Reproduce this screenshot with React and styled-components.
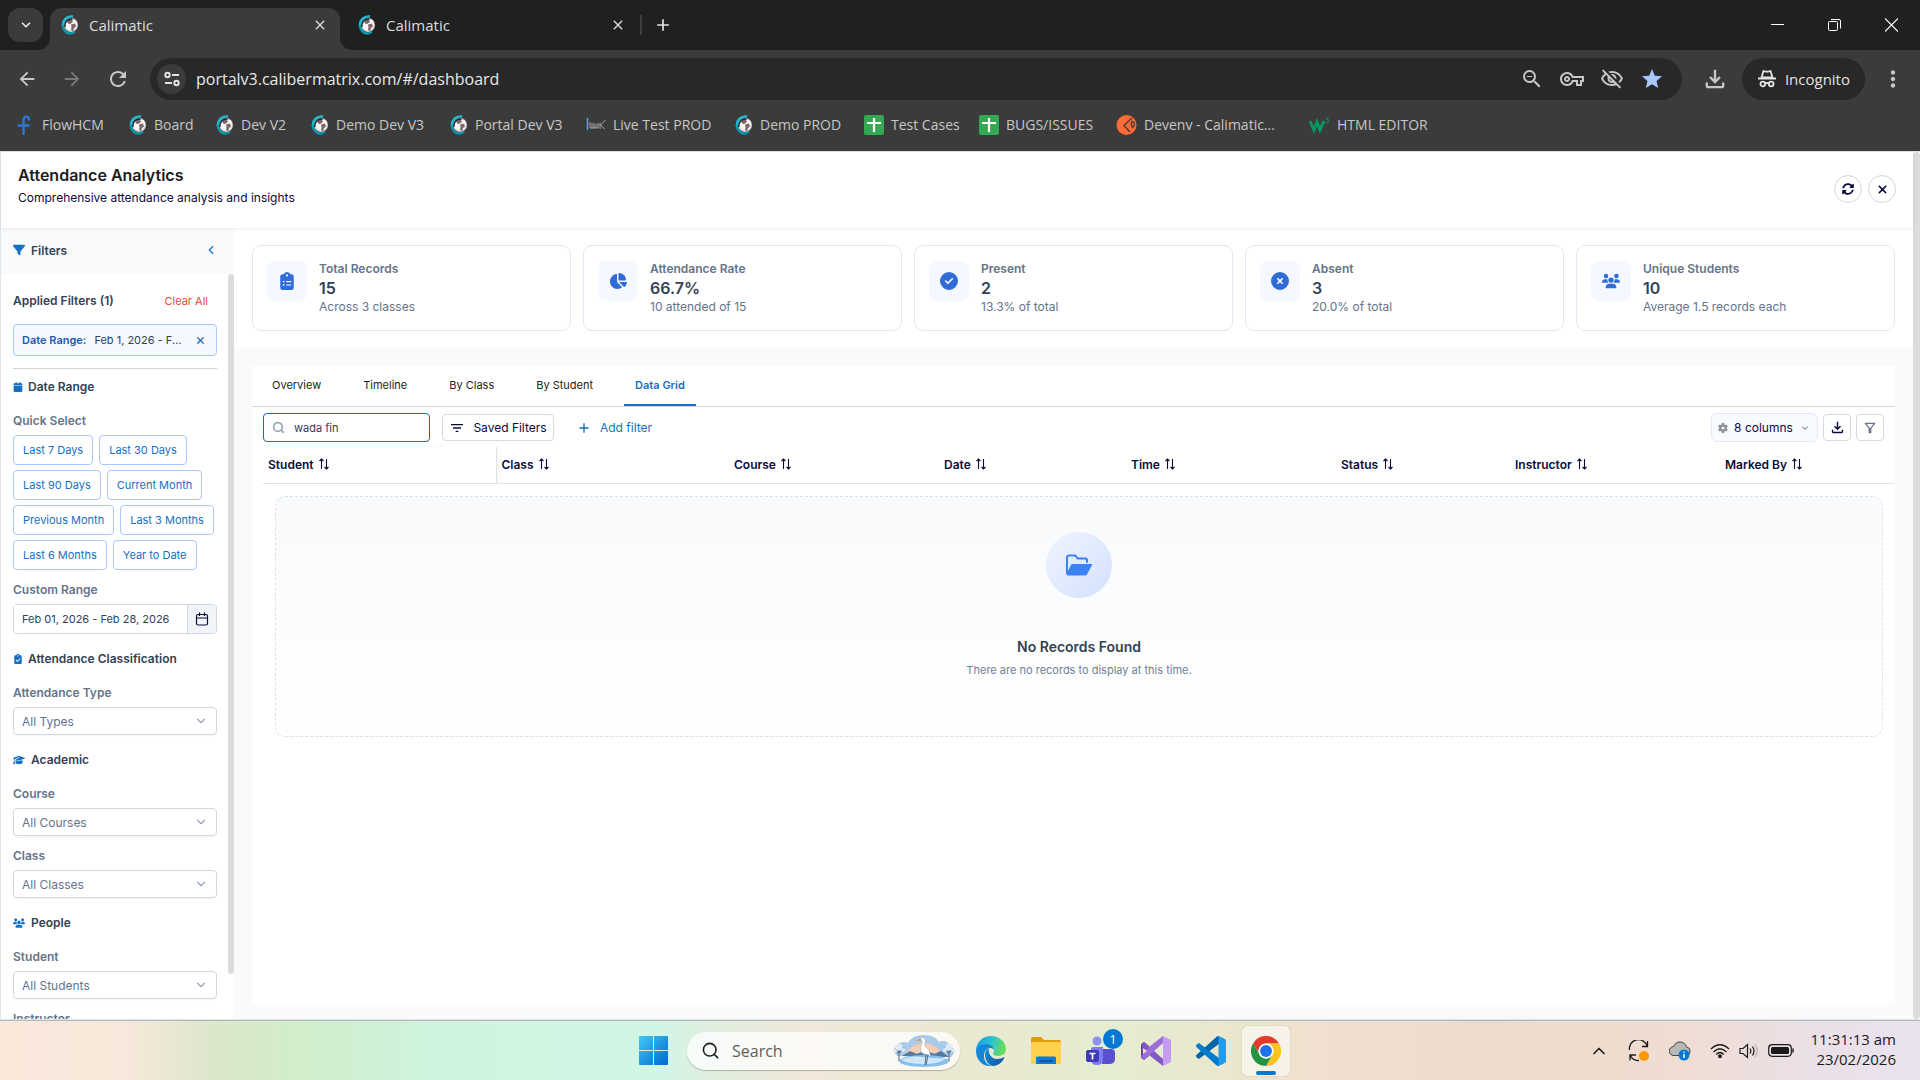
import React, { useState } from "react";
import styled, { createGlobalStyle, css } from "styled-components";
import {
  FaFilter,
  FaClipboardList,
  FaChartPie,
  FaCircleCheck,
  FaCircleXmark,
  FaUsers,
  FaGraduationCap,
  FaCalendar,
  FaClipboardCheck,
  FaXmark,
  FaGear,
} from "react-icons/fa6";
import { FaSyncAlt } from "react-icons/fa";
import {
  MdFilterList,
  MdAdd,
  MdArrowBack,
  MdArrowForward,
  MdRefresh,
  MdZoomOut,
  MdOutlineVpnKey,
  MdOutlineVisibilityOff,
  MdStar,
  MdOutlineFileDownload,
  MdMoreVert,
  MdClose,
  MdKeyboardArrowDown,
  MdOutlineFilterAlt,
} from "react-icons/md";
import { Search, ChevronDown, ChevronLeft, ChevronUp } from "lucide-react";

const appFont = `Inter, "Liberation Sans", sans-serif`;
const systemFont = `"Open Sans", "Noto Sans", sans-serif`;

const colors = {
  primary: "#1570c4",
  icon: "#2f6cd4",
  navy: "#0b0b3b",
  heading: "#334155",
  muted: "#64748b",
  border: "#d3d8e2",
  cardBorder: "#e2e8f4",
  chipBorder: "#a9c8fa",
  tint: "#f5f8ff",
  surface: "#f8fafc",
  thumb: "#dcdcdc",
  toolbar: "#3b3b3b",
  toolbarIcon: "#c7c7c7",
  omnibox: "#282828",
};

const GlobalStyle = createGlobalStyle`
  * {
    box-sizing: border-box;
  }
  body {
    margin: 0;
    font-family: ${appFont};
  }
  button, input, select {
    font: inherit;
    color: inherit;
    margin: 0;
  }
  button {
    background: none;
    border: 0;
    padding: 0;
    cursor: pointer;
  }
  h1, h2, h3, p {
    margin: 0;
  }
  svg {
    display: block;
    flex: none;
  }
`;

const Desktop = styled.div`
  display: flex;
  flex-direction: column;
  height: 100vh;
  overflow: hidden;
`;

/* ---------- browser ---------- */

const Browser = styled.header`
  font-family: ${systemFont};
  background: ${colors.toolbar};
  color: #e3e3e3;
`;

const TabStrip = styled.div`
  display: flex;
  height: 50px;
  padding: 8px 0 0 8px;
  background: #1f2120;
`;

const TabSearch = styled.button`
  display: grid;
  place-items: center;
  width: 35px;
  height: 34px;
  margin-right: 7px;
  border-radius: 12px;
  background: ${colors.toolbar};
`;

const BrowserTab = styled.div`
  display: flex;
  align-items: center;
  gap: 10px;
  width: ${(p) => (p.$active ? 290 : 298)}px;
  padding: 0 12px 8px ${(p) => (p.$active ? 10 : 17)}px;
  font-size: 15px;
  color: #dcdcdc;
  ${(p) =>
    p.$active &&
    css`
      position: relative;
      background: ${colors.toolbar};
      border-radius: 12px 12px 0 0;
      &::before,
      &::after {
        content: "";
        position: absolute;
        bottom: 0;
        width: 12px;
        height: 12px;
      }
      &::before {
        left: -12px;
        background: radial-gradient(circle at 0 0, transparent 12px, ${colors.toolbar} 12px);
      }
      &::after {
        right: -12px;
        background: radial-gradient(circle at 100% 0, transparent 12px, ${colors.toolbar} 12px);
      }
    `}
  span {
    flex: 1;
  }
`;

const NewTab = styled.button`
  display: flex;
  align-items: center;
  height: 34px;
  padding-left: 2px;
  gap: 11px;
  &::before {
    content: "";
    width: 2px;
    height: 20px;
    background: #3c3e3d;
  }
`;

const WindowControls = styled.div`
  display: flex;
  align-items: center;
  gap: 44px;
  height: 34px;
  margin-left: auto;
  padding-right: 22px;
`;

const Toolbar = styled.div`
  display: flex;
  align-items: center;
  height: 58px;
  padding: 0 14px 0 16px;
  color: ${colors.toolbarIcon};
`;

const NavButtons = styled.div`
  display: flex;
  gap: 23px;
  margin-right: 20px;
`;

const Omnibox = styled.div`
  display: flex;
  align-items: center;
  flex: 1;
  height: 42px;
  padding: 0 18px 0 7px;
  border-radius: 21px;
  background: ${colors.omnibox};
  input {
    flex: 1;
    padding: 0 0 0 10px;
    border: 0;
    outline: 0;
    background: none;
    color: #e8e8e8;
    font-size: 16px;
  }
`;

const SiteInfo = styled.button`
  display: grid;
  place-items: center;
  width: 29px;
  height: 30px;
  border-radius: 15px;
  background: ${colors.toolbar};
`;

const OmniboxActions = styled.div`
  display: flex;
  gap: 16px;
`;

const DownloadButton = styled.button`
  margin-left: 19px;
`;

const Incognito = styled.button`
  display: flex;
  align-items: center;
  gap: 9px;
  height: 42px;
  margin: 0 15px 0 13px;
  padding: 0 15px 0 16px;
  border-radius: 21px;
  background: ${colors.omnibox};
  color: #e3e3e3;
  font-size: 15px;
`;

const Bookmarks = styled.nav`
  display: flex;
  height: 43px;
  padding: 7px 0 0 17px;
  color: #c7c7c7;
  font-size: 14px;
  line-height: 20px;
`;

const Bookmark = styled.a`
  display: flex;
  align-items: center;
  gap: 7px;
  height: 20px;
  color: inherit;
  text-decoration: none;
  white-space: nowrap;
  flex: 0 0 ${(p) => p.$width}px;
`;

/* ---------- page ---------- */

const Page = styled.div`
  display: flex;
  flex: 1;
  min-height: 0;
  border: 1px solid #dfe5ee;
  border-right: 0;
  background: #fff;
`;

const PageContent = styled.div`
  display: flex;
  flex-direction: column;
  flex: 1;
  min-width: 0;
`;

const PageScroll = styled.div`
  width: 7px;
  border-radius: 4px;
  background: ${colors.thumb};
`;

const PageHeader = styled.div`
  display: flex;
  justify-content: space-between;
  height: 76px;
  padding: 12px 17px 0;
  box-shadow: 0 1px 4px rgba(0, 0, 0, 0.08);
  z-index: 1;
  h1 {
    font-size: 16px;
    line-height: 22px;
    font-weight: 600;
    color: #1c1c1c;
  }
  p {
    font-size: 12px;
    line-height: 24px;
    color: ${colors.navy};
  }
`;

const HeaderActions = styled.div`
  display: flex;
  gap: 6px;
  padding-top: 11px;
`;

const RoundButton = styled.button`
  display: grid;
  place-items: center;
  width: 28px;
  height: 28px;
  border: 1px solid #d6d6dc;
  border-radius: 50%;
  color: ${colors.navy};
`;

const Body = styled.div`
  display: flex;
  flex: 1;
  min-height: 0;
`;

const Sidebar = styled.aside`
  display: flex;
  flex-direction: column;
  width: 233px;
  color: ${colors.heading};
  font-size: 12px;
`;

const SidebarHeader = styled.div`
  display: flex;
  align-items: center;
  height: 46px;
  padding: 0 16px 2px 12px;
  gap: 6px;
  background: ${colors.surface};
  color: ${colors.primary};
  h2 {
    flex: 1;
    font-size: 12px;
    font-weight: 600;
    color: ${colors.heading};
  }
`;

const SidebarBody = styled.div`
  display: flex;
  flex: 1;
  min-height: 0;
  justify-content: space-between;
`;

const FilterList = styled.div`
  width: 216px;
  padding: 18px 0 0 12px;
  overflow: hidden;
`;

const SidebarThumb = styled.div`
  width: 6px;
  height: 94%;
  border-radius: 3px;
  background: ${colors.thumb};
`;

const Applied = styled.div`
  display: flex;
  justify-content: space-between;
  padding-right: 9px;
  line-height: 18px;
  font-weight: 600;
  button {
    color: #f04444;
    font-size: 11px;
    font-weight: 400;
  }
`;

const Chip = styled.div`
  display: flex;
  align-items: center;
  gap: 8px;
  height: 32px;
  margin-top: 14px;
  padding: 0 10px 0 8px;
  border: 1px solid ${colors.chipBorder};
  border-radius: 4px;
  background: ${colors.tint};
  font-size: 11px;
  b {
    font-weight: 600;
    color: #2459a9;
    white-space: nowrap;
  }
  span {
    flex: 1;
    overflow: hidden;
    text-overflow: ellipsis;
    white-space: nowrap;
  }
  button {
    color: ${colors.icon};
  }
`;

const Rule = styled.hr`
  margin: 12px 0 0;
  border: 0;
  border-top: 1px solid #d0d3d8;
`;

const Section = styled.h3`
  display: flex;
  align-items: center;
  gap: ${(p) => (p.$narrow ? 5 : 6)}px;
  margin-top: ${(p) => (p.$first ? 9 : 16)}px;
  font-size: 12px;
  line-height: 18px;
  font-weight: 600;
  svg {
    color: ${colors.primary};
  }
`;

const FieldLabel = styled.label`
  display: block;
  margin-top: ${(p) => (p.$tight ? 11 : 16)}px;
  margin-bottom: 5px;
  line-height: 18px;
  font-weight: 600;
  color: ${colors.muted};
`;

const QuickSelect = styled.div`
  display: flex;
  flex-wrap: wrap;
  gap: 5px 6px;
  margin-right: -6px;
  button {
    height: 30px;
    padding: 0 9px;
    border: 1px solid ${colors.chipBorder};
    border-radius: 4px;
    font-size: 11px;
    color: ${colors.primary};
  }
`;

const DateField = styled.div`
  display: flex;
  height: 30px;
  border: 1px solid ${colors.border};
  border-radius: 4px;
  overflow: hidden;
  input {
    flex: 1;
    min-width: 0;
    padding: 0 8px;
    border: 0;
    outline: 0;
    font-size: 11px;
  }
  button {
    display: grid;
    place-items: center;
    width: 29px;
    border-left: 1px solid ${colors.border};
    background: #f1f5f9;
    color: ${colors.navy};
  }
`;

const SelectBox = styled.div`
  display: grid;
  align-items: center;
  height: 28px;
  border: 1px solid ${colors.border};
  border-radius: 4px;
  box-shadow: 0 1px 2px rgba(16, 24, 40, 0.05);
  select,
  svg {
    grid-area: 1 / 1;
  }
  select {
    width: 100%;
    height: 26px;
    padding: 0 8px;
    border: 0;
    appearance: none;
    background: none;
    color: ${colors.muted};
  }
  svg {
    justify-self: end;
    margin-right: 8px;
    color: #94a3b8;
    pointer-events: none;
  }
`;

const Main = styled.main`
  display: flex;
  flex-direction: column;
  flex: 1;
  min-width: 0;
  background: ${colors.surface};
`;

const Cards = styled.section`
  display: grid;
  grid-template-columns: repeat(5, 1fr);
  gap: 12px;
  padding: 17px 18px;
  background: #fff;
`;

const StatCard = styled.article`
  display: flex;
  gap: 12px;
  height: 86px;
  padding: 15px 14px;
  border: 1px solid ${colors.cardBorder};
  border-radius: 9px;
  font-size: 12px;
  color: ${colors.muted};
  h2 {
    font-size: 12px;
    line-height: 16px;
    font-weight: 600;
  }
  strong {
    display: block;
    font-size: 16px;
    line-height: 22px;
    font-weight: 600;
    color: ${colors.heading};
  }
  p {
    line-height: 16px;
  }
`;

const StatIcon = styled.div`
  display: grid;
  place-items: center;
  width: 40px;
  height: 40px;
  border-radius: 8px;
  background: ${colors.tint};
  color: ${colors.icon};
`;

const Panel = styled.section`
  flex: 1;
  margin: 18px 18px 14px;
  background: #fff;
  color: ${colors.navy};
  font-size: 12px;
`;

const Tabs = styled.div`
  display: flex;
  gap: 20px;
  height: 41px;
  padding: 0 9px;
  border-bottom: 1px solid #d3d6da;
`;

const Tab = styled.button`
  padding: 0 11px;
  border-bottom: 2px solid ${(p) => (p.$active ? colors.primary : "transparent")};
  color: ${(p) => (p.$active ? colors.primary : "#1c1c1c")};
  font-size: 11px;
  font-weight: ${(p) => (p.$active ? 600 : 400)};
`;

const GridTools = styled.div`
  display: flex;
  align-items: center;
  padding: 6px 11px 5px;
`;

const GridSearch = styled.label`
  display: flex;
  align-items: center;
  gap: 9px;
  width: 167px;
  height: 29px;
  margin-right: 12px;
  padding: 0 8px;
  border: 1px solid ${colors.primary};
  border-radius: 4px;
  color: #94a3b8;
  input {
    width: 100%;
    min-width: 0;
    padding: 0;
    border: 0;
    outline: 0;
    color: ${colors.heading};
    font-size: 11px;
  }
`;

const ToolButton = styled.button`
  display: flex;
  align-items: center;
  justify-content: center;
  gap: 8px;
  height: 27px;
  width: ${(p) => p.$width}px;
  border: 1px solid #d8dae0;
  border-radius: 4px;
  ${(p) =>
    p.$text &&
    css`
      border-color: transparent;
      color: ${colors.primary};
    `}
`;

const RightTools = styled.div`
  display: flex;
  align-items: center;
  gap: 5px;
  margin-left: auto;
`;

const ColumnsButton = styled(ToolButton)`
  height: 29px;
  gap: 6px;
  border-color: ${colors.cardBorder};
  border-radius: 6px;
  background: #f7faff;
  svg {
    color: #8a8f98;
  }
`;

const DataTable = styled.table`
  width: calc(100% - 11px);
  margin-left: 11px;
  table-layout: fixed;
  border-collapse: collapse;
  th {
    height: 36px;
    padding: 0 5px;
    border-bottom: 1px solid #e0e2e6;
    text-align: left;
    font-weight: 600;
  }
  th:first-child {
    border-right: 1px solid #dfe1e5;
    box-shadow: 3px 0 4px rgba(0, 0, 0, 0.04);
  }
  th button {
    display: flex;
    align-items: center;
    gap: 4px;
    font-weight: 600;
  }
  td {
    padding: 12px;
  }
`;

const EmptyState = styled.div`
  display: flex;
  flex-direction: column;
  align-items: center;
  height: 241px;
  padding-top: 35px;
  border: 1px dashed #dde3ec;
  border-radius: 10px;
  background: linear-gradient(${colors.surface}, #fff);
  h2 {
    margin-top: 38px;
    font-size: 14px;
    line-height: 22px;
    font-weight: 600;
    color: ${colors.heading};
  }
  p {
    margin-top: 3px;
    font-size: 11px;
    line-height: 18px;
    color: #718096;
  }
`;

const EmptyIcon = styled.div`
  display: grid;
  place-items: center;
  width: 66px;
  height: 66px;
  border-radius: 50%;
  background: linear-gradient(135deg, #eff4ff, #d3e1fd);
`;

/* ---------- taskbar ---------- */

const Taskbar = styled.footer`
  display: grid;
  grid-template-columns: 1fr auto 1fr;
  align-items: center;
  height: 60px;
  border-top: 1px solid #b4b8b4;
  font-family: ${systemFont};
  color: #1b1b1b;
  background: linear-gradient(
    90deg,
    #fbe9dc 0%,
    #f6e8da 7%,
    #dce7cc 11%,
    #d2edca 15%,
    #cff3dc 22%,
    #d0f6e6 34%,
    #e0efdf 37%,
    #f1e8d9 42%,
    #eae8d1 50%,
    #e5edd0 58%,
    #ebe6cd 65%,
    #f2dfd0 69%,
    #eddccb 77%,
    #f0ddd2 87%,
    #eae0e8 95%,
    #eae3ef 100%
  );
`;

const Pinned = styled.div`
  grid-column: 2;
  display: flex;
  align-items: center;
  gap: 25px;
  padding-left: 9px;
`;

const StartSearch = styled.label`
  display: flex;
  align-items: center;
  gap: 12px;
  width: 273px;
  height: 38px;
  margin: 0 -9px 0 -7px;
  padding: 0 4px 0 14px;
  border-radius: 19px;
  background: rgba(255, 255, 255, 0.75);
  box-shadow: 0 1px 1px rgba(0, 0, 0, 0.25);
  font-size: 16px;
  input {
    flex: 1;
    min-width: 0;
    padding: 0;
    border: 0;
    outline: 0;
    background: none;
  }
  input::placeholder {
    color: #5c5c5c;
    opacity: 1;
  }
`;

const TeamsButton = styled.button`
  position: relative;
  span {
    position: absolute;
    top: -7px;
    right: -7px;
    width: 20px;
    height: 20px;
    border-radius: 50%;
    background: #0078d4;
    color: #fff;
    font-size: 13px;
    line-height: 20px;
  }
`;

const RunningApp = styled.button`
  display: flex;
  flex-direction: column;
  align-items: center;
  justify-content: space-between;
  width: 48px;
  height: 50px;
  margin-left: -9px;
  padding: 10px 0 1px;
  border-radius: 5px;
  background: rgba(255, 255, 255, 0.55);
  box-shadow: 0 0 1px rgba(0, 0, 0, 0.4);
  &::after {
    content: "";
    width: 20px;
    height: 4px;
    border-radius: 2px;
    background: #0078d4;
  }
`;

const Tray = styled.div`
  grid-column: 3;
  justify-self: end;
  display: flex;
  align-items: center;
  padding-right: 24px;
`;

const TrayGroup = styled.div`
  display: flex;
  align-items: center;
  gap: ${(p) => p.$gap}px;
  margin-right: ${(p) => p.$after}px;
`;

const Clock = styled.time`
  padding-bottom: 3px;
  font-size: 15px;
  line-height: 20px;
  text-align: right;
  width: 88px;
  white-space: nowrap;
`;

/* ---------- drawings ---------- */

const Globe = () => (
  <svg width="19" height="20" viewBox="0 0 19 20">
    <circle cx="11" cy="10" r="7" fill="#d9cfcf" />
    <circle cx="11" cy="9.500" r="6" fill="#fbf6f6" />
    <path d="M7 5.500Q10 2.500 14 4l-2 1.500 1 1.500-3 2-2-.5zM11 9.500l4-1 1 3-2 1.500-1 3-2-1 .5-3z" fill="#7d6769" />
    <path d="M12 4A6.500 6.500 0 0 0 5 12" fill="none" stroke="#10252b" strokeWidth="1.400" />
    <path d="M13 1.500A8.500 8.500 0 0 0 3 11" fill="none" stroke="#22bcd4" strokeWidth="2.400" />
    <path d="M2.500 10Q4 18 10 18.500q3 0 5-2" fill="none" stroke="#0e97ae" strokeWidth="2.400" />
  </svg>
);

const FlowMark = () => (
  <svg width="18" height="20" viewBox="0 0 18 20">
    <path d="M12 4.500C12 .5 6.500 1 6.500 5v14M1.500 10.500h10" fill="none" stroke="#2f75d6" strokeWidth="2.500" strokeLinecap="round" />
  </svg>
);

const WaveMark = () => (
  <svg width="20" height="16" viewBox="0 0 20 16">
    <path d="M1.500 1v12" stroke="#35b4e8" strokeWidth="1.500" />
    <path d="M4 5v6M6 11V6M8 11V6M10 11V7M12 11V6M14 12V6M4 11h8M14.500 8l5-5M14.500 8l4 4" fill="none" stroke="#a8a8a8" />
  </svg>
);

const SheetMark = () => (
  <svg width="20" height="20" viewBox="0 0 20 20">
    <rect width="20" height="20" rx="2" fill="#34a853" />
    <path d="M10 3v14M3 8h14" stroke="#fff" strokeWidth="2.200" />
  </svg>
);

const PostmanMark = () => (
  <svg width="21" height="20" viewBox="0 0 21 20">
    <circle cx="10.500" cy="10" r="10" fill="#ff6c37" />
    <path d="M16 3L8 10.500l6 6.500M16.500 6q4 3 0 6.500-2.500-3 0-6.500" fill="none" stroke="#4a3a33" strokeWidth="1.400" />
  </svg>
);

const SchoolsMark = () => (
  <svg width="21" height="18" viewBox="0 0 21 18">
    <path d="M1 5l4 9 3-8 3 8 4-9" fill="none" stroke="#059862" strokeWidth="3" />
    <path d="M16.500 2h3l-1.500 2q2 0 1.500 2t-3 .5" fill="none" stroke="#059862" />
  </svg>
);

const TuneIcon = () => (
  <svg width="18" height="16" viewBox="0 0 18 16" fill="none" stroke="#e3e3e3" strokeWidth="2">
    <circle cx="4.500" cy="4" r="2.200" />
    <path d="M9 4h7M2 12h7" />
    <circle cx="13.500" cy="12" r="2.200" />
  </svg>
);

const IncognitoIcon = () => (
  <svg width="18" height="18" viewBox="0 0 18 18">
    <path d="M3.500 7.500L5.500 1q3.500 1.500 7 0l2 6.500z" fill="none" stroke="#e3e3e3" strokeWidth="1.800" />
    <path d="M0 8.500h18" stroke="#e3e3e3" strokeWidth="2" />
    <g fill="none" stroke="#e3e3e3" strokeWidth="1.800">
      <circle cx="4.800" cy="14" r="2.300" />
      <circle cx="13.200" cy="14" r="2.300" />
      <path d="M7 13.500q2-1 4 0" />
    </g>
  </svg>
);

const MinimizeIcon = () => (
  <svg width="13" height="14" viewBox="0 0 13 14">
    <path d="M0 6.500h13" stroke="#fff" />
  </svg>
);

const RestoreIcon = () => (
  <svg width="13" height="14" viewBox="0 0 13 14" fill="none" stroke="#fff">
    <rect x=".5" y="3.500" width="9" height="9" rx="1" />
    <path d="M3 1.500h8q1.500 0 1.500 1.500v7.500" />
  </svg>
);

const CloseIcon = () => (
  <svg width="13" height="14" viewBox="0 0 13 14">
    <path d="M0 .5l13 13M13 .5L0 13.500" stroke="#fff" strokeWidth="1.200" />
  </svg>
);

const CalendarIcon = () => (
  <svg width="14" height="14" viewBox="0 0 14 14" fill="none" stroke="currentColor" strokeWidth="1.200">
    <rect x="1.500" y="2.500" width="11" height="10.500" rx="1.500" />
    <path d="M1.500 6h11M4.500 .5v3.500M9.500 .5v3.500" />
  </svg>
);

const SortIcon = () => (
  <svg width="12" height="15" viewBox="0 0 12 15" fill="none" stroke="currentColor" strokeWidth="1.100">
    <path d="M3.500 12V2M1.500 4L3.500 2 5.500 4M8.500 2v10M6.500 10L8.500 12 10.500 10" />
  </svg>
);

const FolderOpenIcon = () => (
  <svg width="28" height="22" viewBox="0 0 28 22">
    <path
      d="M2 19V3.500Q2 1.500 4 1.500H9.500Q10.500 1.500 11.200 2.500L12.500 4.500H20.500Q22 4.500 22 6V8"
      fill="none"
      stroke="#3b82f6"
      strokeWidth="2"
      strokeLinecap="round"
    />
    <path d="M7.500 10H26.500Q27.500 10 27 11L22 20.500Q21.500 21.500 20.500 21.500H3Q1 21.500 1.200 19.500L3 17L6 11Q6.500 10 7.500 10Z" fill="#3b82f6" />
  </svg>
);

const WindowsLogo = () => (
  <svg width="30" height="30" viewBox="0 0 30 30">
    <defs>
      <linearGradient id="win" x1="0" y1="0" x2="1" y2="1">
        <stop stopColor="#41c8fa" />
        <stop offset="1" stopColor="#0069c8" />
      </linearGradient>
    </defs>
    <path d="M1 0h13v14H0V1q0-1 1-1zM15 0h13q1 0 1 1v13H15zM0 15h14v14H1q-1 0-1-1zM15 15h14v13q0 1-1 1H15z" fill="url(#win)" />
  </svg>
);

const EgretArt = () => (
  <svg width="64" height="32" viewBox="0 0 64 32">
    <path d="M5 21Q-1 16 5 10Q10 5 16 8Q20 0 32 0Q43 0 47 7Q55 4 58 11Q66 16 59 22Z" fill="#a9cbea" />
    <path d="M14 18Q20 9 31 8Q43 8 49 18Z" fill="#f4cdb3" />
    <path d="M10 21l8-5 7 3 9-4 8 4 7-3 8 6z" fill="#55789b" />
    <ellipse cx="32" cy="26" rx="25" ry="6" fill="#86c1ec" />
    <path d="M9 25q9-5 22-3t24 1q-8 6-23 6T9 25z" fill="#cfe7f8" />
    <g stroke="#58708a" fill="none" strokeWidth="1.100">
      <path d="M7 26V13M7 19l-4-5M7 18l5-5M57 26V13M57 19l-4-5M57 18l4-5" />
    </g>
    <g fill="#e5eef8" opacity=".9">
      <circle cx="7" cy="12" r="3.500" />
      <circle cx="3" cy="16" r="2" />
      <circle cx="11" cy="15" r="2" />
      <circle cx="57" cy="12" r="3.500" />
      <circle cx="53" cy="15" r="2" />
      <circle cx="61" cy="15" r="2" />
    </g>
    <path
      d="M27.500 4.500Q29 1.500 31.500 2.500Q34.500 4 33 8Q32 11 34 12.500Q38 14 38.500 22L36 19.500Q30 20 28.500 15Q28 12 30 8.500Q31 6 29.500 5.500Z"
      fill="#fff"
      stroke="#8fa4b8"
      strokeWidth=".5"
    />
    <path d="M29 3.500l-6 2.500 6-.5z" fill="#e28a35" />
    <path d="M34 20l-1 10M36 20l-2 10" stroke="#4d5b6b" strokeWidth=".9" />
  </svg>
);

const EdgeLogo = () => (
  <svg width="30" height="30" viewBox="0 0 30 30">
    <defs>
      <linearGradient id="edgeTop" x1="0" y1=".3" x2="1" y2=".5">
        <stop stopColor="#1b9de2" />
        <stop offset=".5" stopColor="#2bc3d2" />
        <stop offset="1" stopColor="#6be04d" />
      </linearGradient>
      <linearGradient id="edgeLow" x1="0" y1="0" x2="1" y2="1">
        <stop stopColor="#1a94e0" />
        <stop offset="1" stopColor="#0b4f9e" />
      </linearGradient>
    </defs>
    <path d="M0 15C0 6 7 0 15 0s15 6 15 13c0 5-4 7-8 7-3 0-5-1-5-2.500 0-1 1.200-1.500 1.200-3.500 0-3-3-5-6.700-5C6 9 1 12 0 15z" fill="url(#edgeTop)" />
    <path d="M0 15c0-3 4-7 10-7 5 0 8 3 8 6 0 0-1.500-2-4-2-3 0-6 3-6 8 0 6 4 9 8 10C7 31 0 24 0 15z" fill="#1487d8" />
    <path d="M9 18c0-3 2-5 4-6-1 5 2 11 8 11 3 0 5-1 6-1.500 1-.5 1.500.2 1 1C26 27 21 30 17 30c-5-1-8-6-8-12z" fill="url(#edgeLow)" />
  </svg>
);

const ExplorerLogo = () => (
  <svg width="30" height="28" viewBox="0 0 30 28">
    <path d="M0 2q0-2 2-2h8l3 3h15q2 0 2 2v8H0z" fill="#e09c10" />
    <rect y="5" width="30" height="22" rx="1.500" fill="#ffd04b" />
    <path d="M5 27v-6q0-1.500 1.500-1.500h17Q25 19.500 25 21v6z" fill="#1179cc" />
    <path d="M9 24h12" stroke="#0b4d91" strokeWidth="1.500" strokeLinecap="round" />
  </svg>
);

const TeamsLogo = () => (
  <svg width="30" height="30" viewBox="0 0 30 30">
    <circle cx="11" cy="5" r="4.500" fill="#8b91f3" />
    <path d="M16 13h9q4 0 4 4v6q0 5-6 5h-7z" fill="#5b50cf" />
    <path d="M5 13q0-2 2-2h10v12q0 6-6 6t-6-6z" fill="#7f7bf0" />
    <rect y="14" width="13" height="12" rx="2" fill="#3d3bb8" />
    <path d="M3.500 17.500h6M6.500 17.500v6" stroke="#fff" strokeWidth="1.700" />
  </svg>
);

const VisualStudioLogo = () => (
  <svg width="30" height="30" viewBox="0 0 30 30">
    <path d="M0 8l3-2 5 4v10l-5 4-3-2z" fill="#6a45a0" />
    <path d="M3 6l19 17v7L8 19 0 9z" fill="#8257c6" />
    <path d="M3 24L22 7V0L8 11 0 21z" fill="#9a6dd7" />
    <path d="M2 12l4 3-4 3z" fill="#e9e6cf" />
    <path d="M22 9v12l-8-6z" fill="#e6e9d2" />
    <path d="M22 0l8 4v22l-8 4z" fill="#c59bf5" />
  </svg>
);

const CodeLogo = () => (
  <svg width="30" height="30" viewBox="0 0 100 100">
    <path
      d="M96.500 10.800 75.900.9a6.200 6.200 0 0 0-7.100 1.200L1.300 63.600a4.200 4.200 0 0 0 0 6.100l5.500 5a4.200 4.200 0 0 0 5.300.2L93.300 13.400A4.100 4.100 0 0 1 100 16.700a6.300 6.300 0 0 0-3.500-5.900Z"
      fill="#0065a9"
    />
    <path
      d="M96.500 89.300 75.900 99.200a6.200 6.200 0 0 1-7.100-1.200L1.300 36.400a4.200 4.200 0 0 1 0-6.100l5.500-5a4.200 4.200 0 0 1 5.300-.2l81.300 61.600A4.100 4.100 0 0 0 100 83.400a6.300 6.300 0 0 1-3.500 5.900Z"
      fill="#007acc"
    />
    <path
      d="M75.900 99.100a6.200 6.200 0 0 1-7.100-1.200c2.300 2.300 6.200.7 6.200-2.600V4.700c0-3.300-3.900-4.900-6.200-2.600a6.200 6.200 0 0 1 7.100-1.200l20.600 9.900a6.300 6.300 0 0 1 3.500 5.600v67.200a6.300 6.300 0 0 1-3.500 5.600Z"
      fill="#1f9cf0"
    />
  </svg>
);

const ChromeLogo = () => (
  <svg width="30" height="30" viewBox="0 0 48 48">
    <path d="M3.200 12A24 24 0 0 1 44.800 12H24A12 12 0 0 0 13.600 30Z" fill="#e33b2e" />
    <path d="M44.800 12A24 24 0 0 1 24 48L34.400 30A12 12 0 0 0 24 12Z" fill="#fcc31e" />
    <path d="M3.200 12L13.600 30A12 12 0 0 0 34.400 30L24 48A24 24 0 0 1 3.200 12Z" fill="#229342" />
    <circle cx="24" cy="24" r="12" fill="#fff" />
    <circle cx="24" cy="24" r="9.500" fill="#1a73e8" />
  </svg>
);

const SyncIcon = () => (
  <svg width="22" height="22" viewBox="0 0 22 22" fill="none" stroke="#1b1b1b" strokeWidth="1.300">
    <path d="M1.500 10A9 9 0 0 1 19 6M19.500 1v5.500H14M2 20.500V15h6M2 15q3 6 9 5.500" />
    <circle cx="16" cy="16" r="5" fill="#ff9800" stroke="none" />
  </svg>
);

const CloudIcon = () => (
  <svg width="22" height="20" viewBox="0 0 22 20">
    <path d="M5 14.500a4.500 4.500 0 0 1-.5-9Q6.500 1 11 1q5 0 6.500 5a4.300 4.300 0 0 1 0 8.500z" fill="#b8b8b8" stroke="#444" />
    <circle cx="15" cy="14" r="5.500" fill="#0078d4" />
    <path d="M15 13v4M15 10.500v1.300" stroke="#fff" strokeWidth="1.500" />
  </svg>
);

const WifiIcon = () => (
  <svg width="20" height="16" viewBox="0 0 20 16" fill="none" stroke="#1b1b1b" strokeWidth="1.400">
    <path d="M1 6Q10-2.500 19 6M3.500 9Q10 2.500 16.500 9M6.200 11.500Q10 7.500 13.800 11.500" />
    <circle cx="10" cy="13.300" r="1.300" fill="#1b1b1b" />
  </svg>
);

const VolumeIcon = () => (
  <svg width="20" height="16" viewBox="0 0 20 16" fill="none" stroke="#1b1b1b" strokeWidth="1.200">
    <path d="M1 5.500h3L8.500 1.500v13L4 10.500H1zM11 5.500q1.800 2.500 0 5M13.500 3.500q3 4.500 0 9" />
    <path d="M16 1.500q4.500 6.500 0 13" stroke="#b9ada7" />
  </svg>
);

const BatteryIcon = () => (
  <svg width="26" height="13" viewBox="0 0 26 13">
    <rect x=".7" y=".7" width="22.600" height="11.600" rx="3.500" fill="none" stroke="#1b1b1b" strokeWidth="1.200" />
    <rect x="3" y="3" width="18" height="7" rx="1.500" fill="#1b1b1b" />
    <path d="M24.500 4.500q1.500 2 0 4" fill="none" stroke="#1b1b1b" strokeWidth="1.300" />
  </svg>
);

/* ---------- data ---------- */

const bookmarks = [
  { label: "FlowHCM", icon: <FlowMark />, width: 111 },
  { label: "Board", icon: <Globe />, width: 87 },
  { label: "Dev V2", icon: <Globe />, width: 95 },
  { label: "Demo Dev V3", icon: <Globe />, width: 139 },
  { label: "Portal Dev V3", icon: <Globe />, width: 137 },
  { label: "Live Test PROD", icon: <WaveMark />, width: 148 },
  { label: "Demo PROD", icon: <Globe />, width: 130 },
  { label: "Test Cases", icon: <SheetMark />, width: 115 },
  { label: "BUGS/ISSUES", icon: <SheetMark />, width: 137 },
  { label: "Devenv - Calimatic...", icon: <PostmanMark />, width: 193 },
  { label: "HTML EDITOR", icon: <SchoolsMark />, width: 130 },
];

const stats = [
  { label: "Total Records", value: "15", note: "Across 3 classes", Icon: FaClipboardList },
  { label: "Attendance Rate", value: "66.7%", note: "10 attended of 15", Icon: FaChartPie },
  { label: "Present", value: "2", note: "13.3% of total", Icon: FaCircleCheck },
  { label: "Absent", value: "3", note: "20.0% of total", Icon: FaCircleXmark },
  { label: "Unique Students", value: "10", note: "Average 1.5 records each", Icon: FaUsers },
];

const quickRanges = [
  "Last 7 Days",
  "Last 30 Days",
  "Last 90 Days",
  "Current Month",
  "Previous Month",
  "Last 3 Months",
  "Last 6 Months",
  "Year to Date",
];

const columns = [
  ["Student", 233],
  ["Class", 233],
  ["Course", 210],
  ["Date", 187],
  ["Time", 210],
  ["Status", 174],
  ["Instructor", 210],
  ["Marked By", 175],
];

const tabs = ["Overview", "Timeline", "By Class", "By Student", "Data Grid"];

const FilterSelect = ({ id, label, placeholder, tight }) => (
  <>
    <FieldLabel htmlFor={id} $tight={tight}>
      {label}
    </FieldLabel>
    <SelectBox>
      <select id={id}>
        <option>{placeholder}</option>
      </select>
      <ChevronDown size={14} />
    </SelectBox>
  </>
);

const BrowserChrome = () => (
  <Browser>
    <TabStrip>
      <TabSearch aria-label="Search tabs">
        <ChevronDown size={14} strokeWidth={3} />
      </TabSearch>
      <BrowserTab $active>
        <Globe />
        <span>Calimatic</span>
        <button aria-label="Close tab">
          <MdClose size={16} />
        </button>
      </BrowserTab>
      <BrowserTab>
        <Globe />
        <span>Calimatic</span>
        <button aria-label="Close tab">
          <MdClose size={16} />
        </button>
      </BrowserTab>
      <NewTab aria-label="New tab">
        <MdAdd size={20} />
      </NewTab>
      <WindowControls>
        <button aria-label="Minimize">
          <MinimizeIcon />
        </button>
        <button aria-label="Restore">
          <RestoreIcon />
        </button>
        <button aria-label="Close window">
          <CloseIcon />
        </button>
      </WindowControls>
    </TabStrip>
    <Toolbar>
      <NavButtons>
        <button aria-label="Back">
          <MdArrowBack size={22} />
        </button>
        <button aria-label="Forward">
          <MdArrowForward size={22} color="#7a7a7a" />
        </button>
        <button aria-label="Reload">
          <MdRefresh size={24} />
        </button>
      </NavButtons>
      <Omnibox>
        <SiteInfo aria-label="Site information">
          <TuneIcon />
        </SiteInfo>
        <input aria-label="Address" defaultValue="portalv3.calibermatrix.com/#/dashboard" />
        <OmniboxActions>
          <MdZoomOut size={24} />
          <MdOutlineVpnKey size={24} />
          <MdOutlineVisibilityOff size={24} />
          <MdStar size={24} color="#a8c7fa" />
        </OmniboxActions>
      </Omnibox>
      <DownloadButton aria-label="Downloads">
        <MdOutlineFileDownload size={28} />
      </DownloadButton>
      <Incognito>
        <IncognitoIcon />
        Incognito
      </Incognito>
      <button aria-label="Browser menu">
        <MdMoreVert size={26} />
      </button>
    </Toolbar>
    <Bookmarks>
      {bookmarks.map((b) => (
        <Bookmark key={b.label} href="#" $width={b.width}>
          {b.icon}
          {b.label}
        </Bookmark>
      ))}
    </Bookmarks>
  </Browser>
);

const Filters = () => (
  <Sidebar>
    <SidebarHeader>
      <FaFilter size={12} />
      <h2>Filters</h2>
      <button aria-label="Collapse filters">
        <ChevronLeft size={14} />
      </button>
    </SidebarHeader>
    <SidebarBody>
      <FilterList>
        <Applied>
          Applied Filters (1)
          <button>Clear All</button>
        </Applied>
        <Chip>
          <b>Date Range:</b>
          <span>Feb 1, 2026 - Feb 28, 2026</span>
          <button aria-label="Remove date range">
            <FaXmark size={11} />
          </button>
        </Chip>
        <Rule />
        <Section $first $narrow>
          <FaCalendar size={10} />
          Date Range
        </Section>
        <FieldLabel as="div">Quick Select</FieldLabel>
        <QuickSelect>
          {quickRanges.map((r) => (
            <button key={r}>{r}</button>
          ))}
        </QuickSelect>
        <FieldLabel htmlFor="range" $tight>
          Custom Range
        </FieldLabel>
        <DateField>
          <input id="range" defaultValue="Feb 01, 2026 - Feb 28, 2026" />
          <button aria-label="Open calendar">
            <CalendarIcon />
          </button>
        </DateField>
        <Section $narrow>
          <FaClipboardCheck size={10} />
          Attendance Classification
        </Section>
        <FilterSelect id="type" label="Attendance Type" placeholder="All Types" />
        <Section>
          <FaGraduationCap size={12} />
          Academic
        </Section>
        <FilterSelect id="course" label="Course" placeholder="All Courses" />
        <FilterSelect id="class" label="Class" placeholder="All Classes" tight />
        <Section>
          <FaUsers size={12} />
          People
        </Section>
        <FilterSelect id="student" label="Student" placeholder="All Students" />
        <FilterSelect id="instructor" label="Instructor" placeholder="All Instructors" tight />
      </FilterList>
      <SidebarThumb />
    </SidebarBody>
  </Sidebar>
);

const DataGrid = () => {
  const [tab, setTab] = useState("Data Grid");
  return (
    <Panel>
      <Tabs role="tablist">
        {tabs.map((t) => (
          <Tab key={t} role="tab" aria-selected={t === tab} $active={t === tab} onClick={() => setTab(t)}>
            {t}
          </Tab>
        ))}
      </Tabs>
      <GridTools>
        <GridSearch>
          <Search size={13} strokeWidth={3} />
          <input aria-label="Search records" defaultValue="wada fin" />
        </GridSearch>
        <ToolButton $width={112}>
          <MdFilterList size={16} />
          Saved Filters
        </ToolButton>
        <ToolButton $width={120} $text>
          <MdAdd size={16} />
          Add filter
        </ToolButton>
        <RightTools>
          <ColumnsButton $width={107}>
            <FaGear size={10} />
            8 columns
            <MdKeyboardArrowDown size={12} />
          </ColumnsButton>
          <ToolButton $width={28} aria-label="Export">
            <MdOutlineFileDownload size={17} />
          </ToolButton>
          <ToolButton $width={28} aria-label="Toggle filters">
            <MdOutlineFilterAlt size={16} color={colors.muted} />
          </ToolButton>
        </RightTools>
      </GridTools>
      <DataTable>
        <colgroup>
          {columns.map(([name, width]) => (
            <col key={name} width={width} />
          ))}
        </colgroup>
        <thead>
          <tr>
            {columns.map(([name]) => (
              <th key={name} scope="col">
                <button>
                  {name}
                  <SortIcon />
                </button>
              </th>
            ))}
          </tr>
        </thead>
        <tbody>
          <tr>
            <td colSpan={columns.length}>
              <EmptyState>
                <EmptyIcon>
                  <FolderOpenIcon />
                </EmptyIcon>
                <h2>No Records Found</h2>
                <p>There are no records to display at this time.</p>
              </EmptyState>
            </td>
          </tr>
        </tbody>
      </DataTable>
    </Panel>
  );
};

const App = () => {
  return (
    <Desktop>
      <GlobalStyle />
      <BrowserChrome />
      <Page>
        <PageContent>
          <PageHeader>
            <div>
              <h1>Attendance Analytics</h1>
              <p>Comprehensive attendance analysis and insights</p>
            </div>
            <HeaderActions>
              <RoundButton aria-label="Refresh">
                <FaSyncAlt size={12} />
              </RoundButton>
              <RoundButton aria-label="Close">
                <FaXmark size={13} />
              </RoundButton>
            </HeaderActions>
          </PageHeader>
          <Body>
            <Filters />
            <Main>
              <Cards>
                {stats.map(({ label, value, note, Icon }) => (
                  <StatCard key={label}>
                    <StatIcon>
                      <Icon size={18} />
                    </StatIcon>
                    <div>
                      <h2>{label}</h2>
                      <strong>{value}</strong>
                      <p>{note}</p>
                    </div>
                  </StatCard>
                ))}
              </Cards>
              <DataGrid />
            </Main>
          </Body>
        </PageContent>
        <PageScroll />
      </Page>
      <Taskbar>
        <Pinned>
          <button aria-label="Start">
            <WindowsLogo />
          </button>
          <StartSearch>
            <Search size={19} />
            <input type="text" placeholder="Search" />
            <EgretArt />
          </StartSearch>
          <button aria-label="Edge">
            <EdgeLogo />
          </button>
          <button aria-label="File Explorer">
            <ExplorerLogo />
          </button>
          <TeamsButton aria-label="Teams">
            <TeamsLogo />
            <span>1</span>
          </TeamsButton>
          <button aria-label="Visual Studio">
            <VisualStudioLogo />
          </button>
          <button aria-label="Visual Studio Code">
            <CodeLogo />
          </button>
          <RunningApp aria-label="Chrome">
            <ChromeLogo />
          </RunningApp>
        </Pinned>
        <Tray>
          <TrayGroup $gap={19} $after={19}>
            <ChevronUp size={20} />
            <SyncIcon />
            <CloudIcon />
          </TrayGroup>
          <TrayGroup $gap={9} $after={14}>
            <WifiIcon />
            <VolumeIcon />
            <BatteryIcon />
          </TrayGroup>
          <Clock>
            11:31:13 am
            <br />
            23/02/2026
          </Clock>
        </Tray>
      </Taskbar>
    </Desktop>
  );
};

export default App;
